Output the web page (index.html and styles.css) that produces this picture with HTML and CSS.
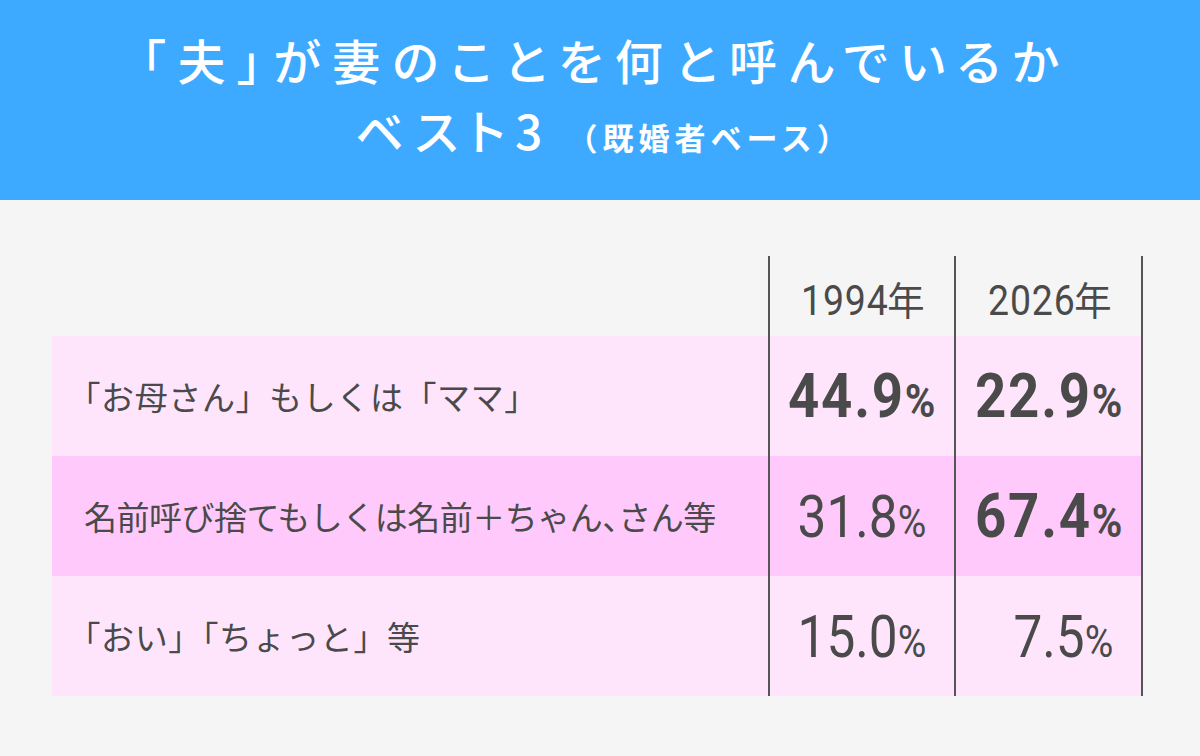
FILE: index.html
```html
<!DOCTYPE html>
<html lang="ja">
<head>
<meta charset="utf-8">
<title>「夫」が妻のことを何と呼んでいるか ベスト3</title>
<link rel="stylesheet" href="styles.css">
</head>
<body>
<header class="hero">
  <h1 class="title-main">「夫」が妻のことを何と呼んでいるか</h1>
  <p class="title-sub"><span class="best">ベスト3</span><span class="note">（既婚者ベース）</span></p>
</header>
<main class="table">
  <div class="row head">
    <div class="label"></div>
    <div class="cell"><span class="year">1994<span class="nen">年</span></span></div>
    <div class="cell last"><span class="year">2026<span class="nen">年</span></span></div>
  </div>
  <div class="row light">
    <div class="label quoted">「お母さん」もしくは「ママ」</div>
    <div class="cell"><span class="num strong">44.9<span class="pct">%</span></span></div>
    <div class="cell last"><span class="num strong">22.9<span class="pct">%</span></span></div>
  </div>
  <div class="row dark">
    <div class="label">名前呼び捨てもしくは名前＋ちゃん<span class="half">、</span>さん等</div>
    <div class="cell"><span class="num">31.8<span class="pct">%</span></span></div>
    <div class="cell last"><span class="num strong">67.4<span class="pct">%</span></span></div>
  </div>
  <div class="row light">
    <div class="label quoted">「おい」「ちょっと」等</div>
    <div class="cell"><span class="num">15.0<span class="pct">%</span></span></div>
    <div class="cell last"><span class="num"><span class="ghost">0</span>7.5<span class="pct">%</span></span></div>
  </div>
</main>
</body>
</html>
```
FILE: styles.css
```css
html, body {
  margin: 0;
  padding: 0;
}
body {
  width: 1200px;
  height: 756px;
  background: #f5f5f5;
  font-family: "Noto Sans CJK JP", "Noto Sans", sans-serif;
  color: #4a4a4a;
  overflow: hidden;
}
.hero {
  height: 200px;
  box-sizing: border-box;
  padding-top: 24px;
  background: #3eaaff;
  color: #ffffff;
  display: flex;
  flex-direction: column;
  align-items: center;
}
.title-main {
  margin: 0 -12px 0 0;
  font-size: 48px;
  font-weight: 500;
  line-height: 70px;
  letter-spacing: 12px;
  font-feature-settings: "palt";
}
.title-sub {
  margin: 0 0 0 8px;
  display: flex;
  align-items: baseline;
  line-height: 70px;
}
.best {
  font-size: 48px;
  font-weight: 500;
  letter-spacing: 10px;
  font-feature-settings: "palt";
}
.note {
  font-size: 31px;
  font-weight: 700;
  letter-spacing: 5px;
  margin-left: 14px;
}
.table {
  margin: 56px 0 0 52px;
  width: 1091px;
}
.row {
  display: grid;
  grid-template-columns: 716px 186px 189px;
  height: 120px;
}
.row.head {
  height: 80px;
}
.row.light {
  background: #ffe5fc;
}
.row.dark {
  background: #ffcafb;
}
.label {
  display: flex;
  align-items: center;
  padding-left: 32px;
  font-size: 33px;
  letter-spacing: -0.5px;
  white-space: nowrap;
  text-spacing-trim: trim-start;
}
.label.quoted {
  letter-spacing: 0.6px;
}
.half {
  font-feature-settings: "halt";
}
.cell {
  border-left: 2px solid #555555;
  display: flex;
  align-items: center;
  justify-content: center;
}
.cell.last {
  border-right: 2px solid #555555;
}
.year {
  display: inline-block;
  font-family: Roboto, "Liberation Sans", "Noto Sans CJK JP", sans-serif;
  font-size: 43px;
  letter-spacing: 1px;
  padding-top: 4px;
  transform: scaleX(0.87);
}
.nen {
  display: inline-block;
  font-family: "Noto Sans CJK JP", sans-serif;
  font-size: 39px;
  letter-spacing: 0;
  transform: scaleX(1.1);
}
.num {
  display: inline-block;
  font-family: Roboto, "Liberation Sans", sans-serif;
  font-size: 59px;
  letter-spacing: 0;
  line-height: 1;
  transform: scaleX(0.87);
}
.num.strong {
  font-weight: 700;
  font-size: 62px;
  letter-spacing: 2px;
  transform: scaleX(0.88);
}
.pct {
  font-size: 0.76em;
  letter-spacing: 0;
}
.ghost {
  visibility: hidden;
}
```
